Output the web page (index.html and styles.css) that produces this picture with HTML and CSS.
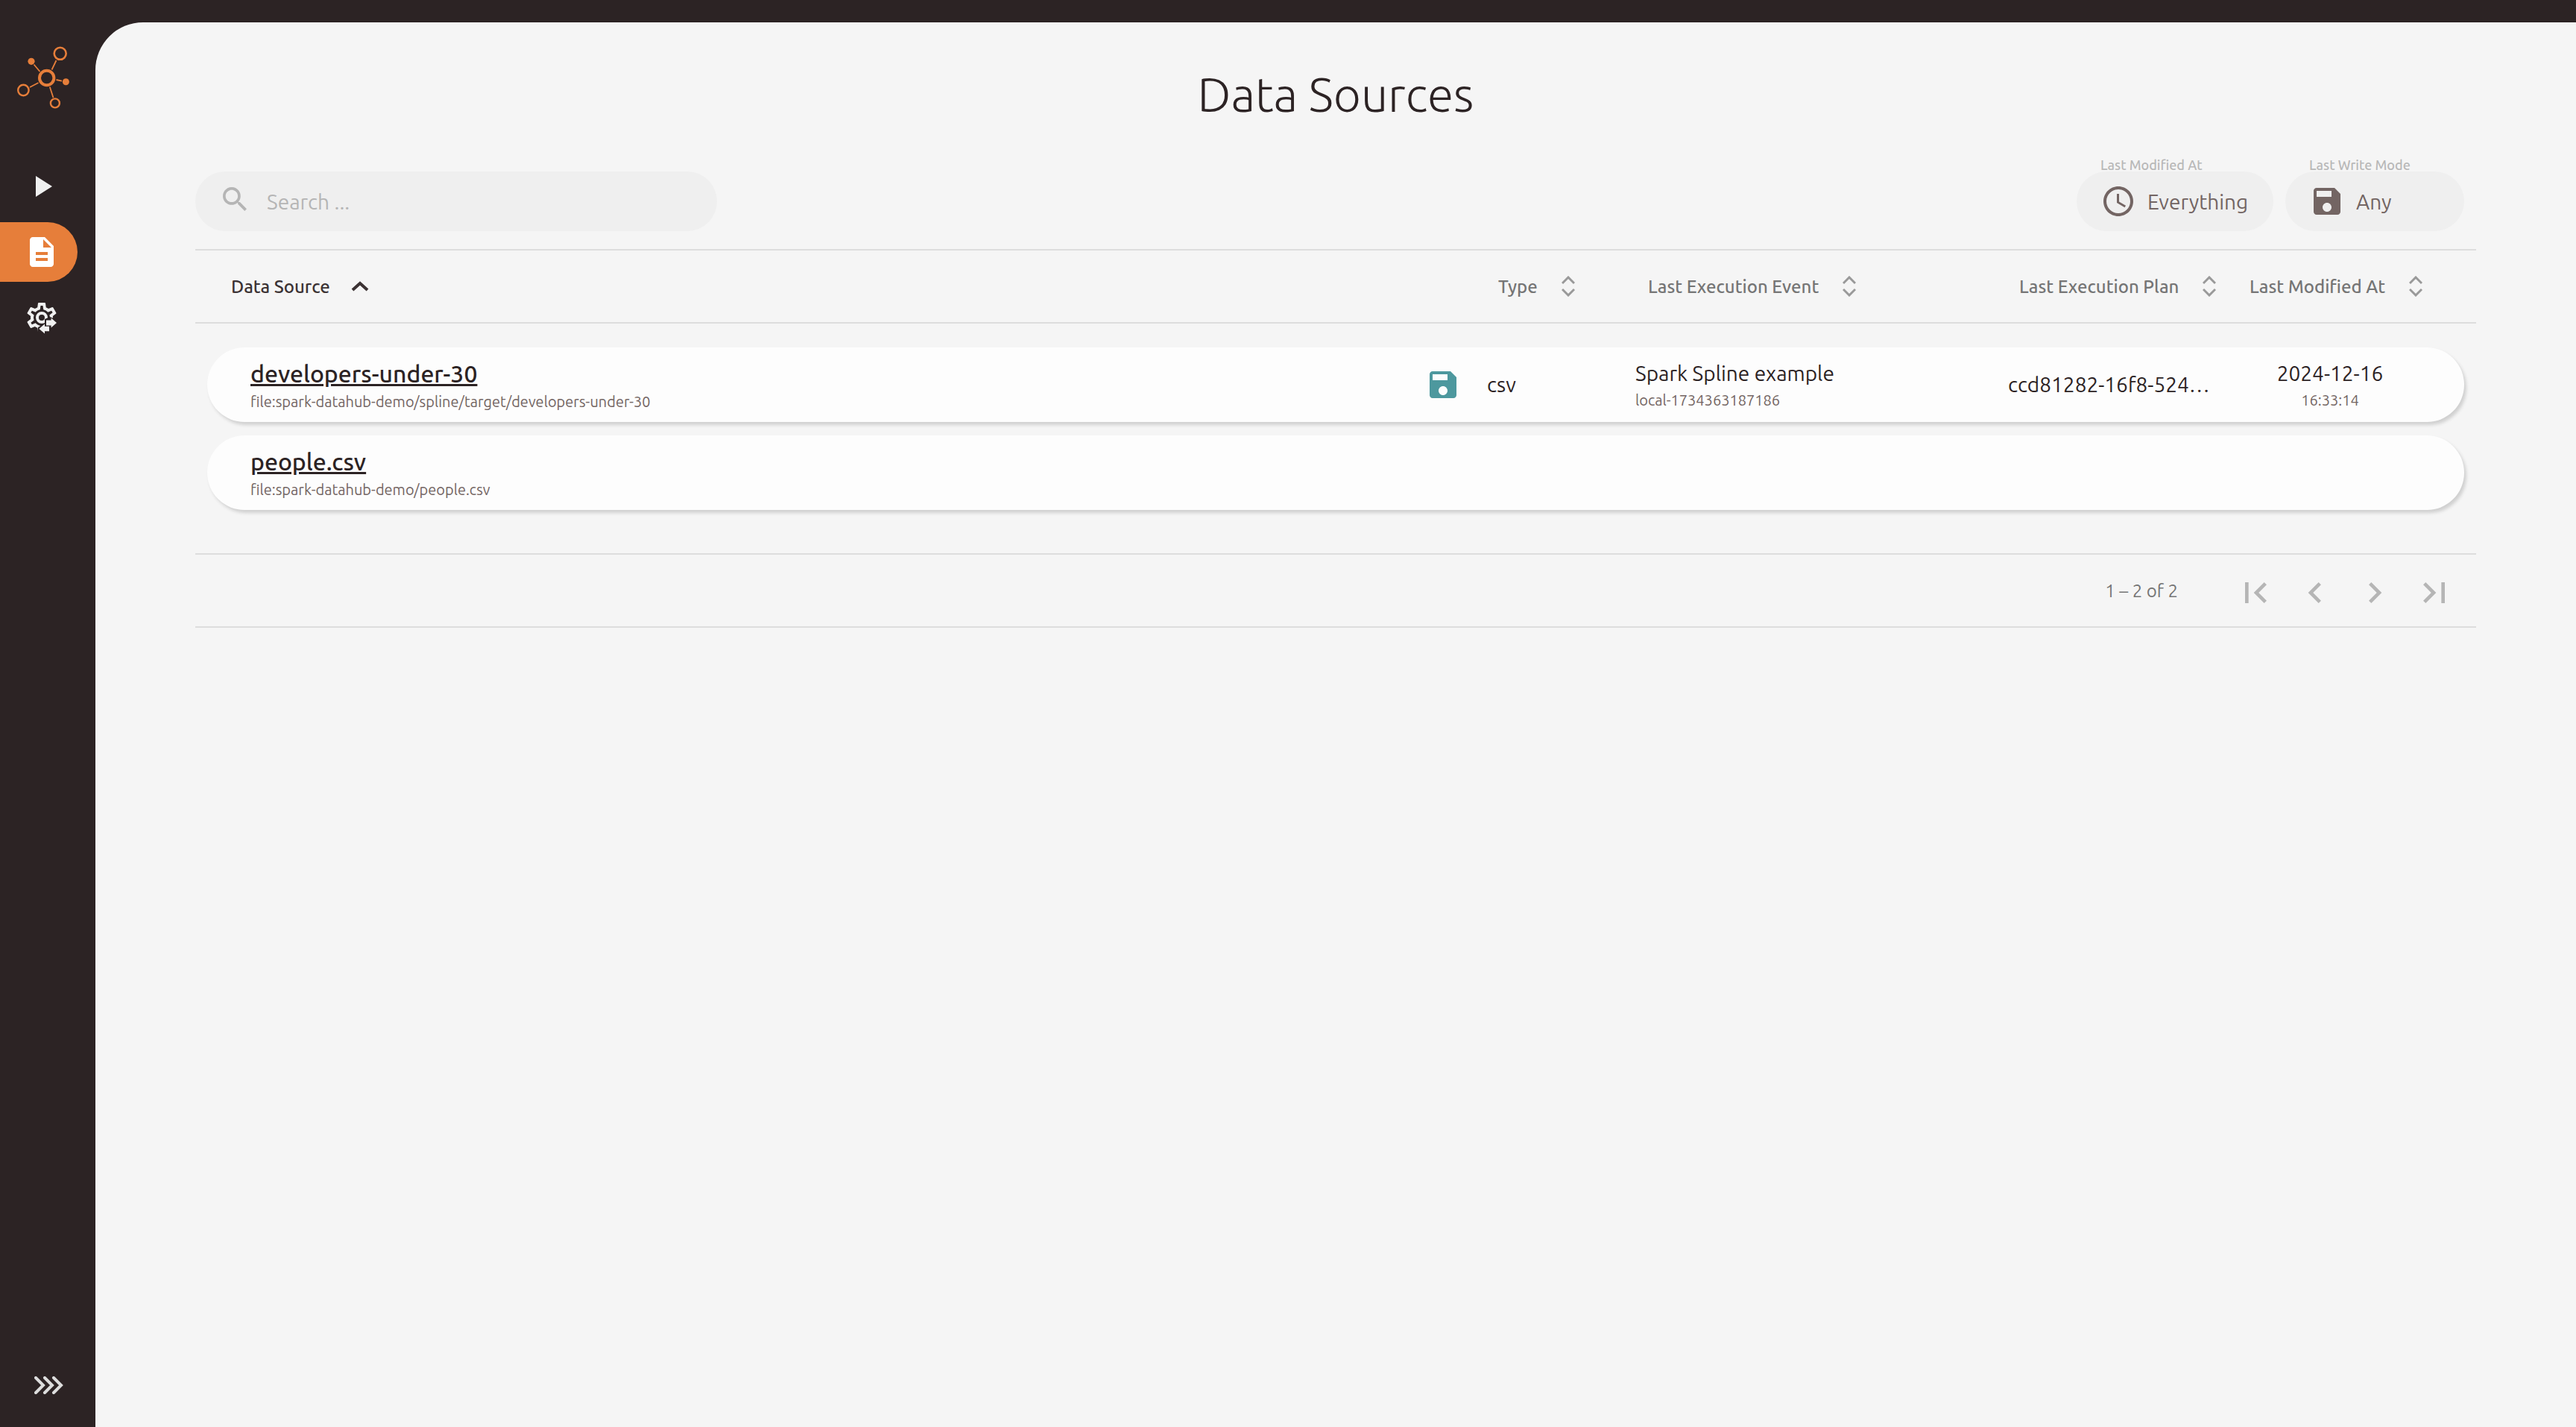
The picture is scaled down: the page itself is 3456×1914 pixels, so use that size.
FILE: index.html
```html
<!DOCTYPE html>
<html lang="en">
<head>
  <meta charset="utf-8">
  <meta name="viewport" content="width=device-width, initial-scale=1">
  <title>Data Sources</title>
  <link rel="stylesheet" href="styles.css">
</head>
<body>
  <svg width="0" height="0" class="sprite" aria-hidden="true">
    <symbol id="save" viewBox="0 0 24 24"><path d="M17 3H5c-1.110 0-2 .9-2 2v14c0 1.100.89 2 2 2h14c1.100 0 2-.9 2-2V7l-4-4zm-5 16c-1.660 0-3-1.340-3-3s1.340-3 3-3 3 1.340 3 3-1.340 3-3 3zm3-10H5V5h10v4z"/></symbol>
    <symbol id="sort" viewBox="0 0 18 28"><path d="M1 10l8-8 8 8M1 18l8 8 8-8" fill="none" stroke="currentColor" stroke-width="3"/></symbol>
  </svg>

  <div class="app">
    <aside class="sidebar">
      <a class="logo" href="#" aria-label="Home">
        <svg viewBox="16 56 84 96" width="84" height="96" stroke="currentColor">
          <circle cx="62.700" cy="104.500" r="9.700" stroke-width="4"/>
          <circle cx="80.700" cy="71.800" r="8" stroke-width="2.600"/>
          <circle cx="31.400" cy="121" r="7.200" stroke-width="2.400"/>
          <circle cx="73.900" cy="138.400" r="6" stroke-width="2.400"/>
          <circle cx="42" cy="82.300" r="4.600" fill="currentColor" stroke="none"/>
          <circle cx="88.400" cy="109.700" r="4.500" fill="currentColor" stroke="none"/>
          <path d="M45.500 86.500l8 9.500M75.500 81l-6 12.500M75.500 107l7.500 1.700M66.800 116.500l4.700 14.500M51.500 111l-11.500 6" stroke-width="1.800"/>
        </svg>
      </a>
      <nav class="nav" aria-label="Main">
        <a class="nav-item" href="#" aria-label="Execution events"><svg viewBox="0 0 24 24"><path d="M8 5v14l11-7z"/></svg></a>
        <a class="nav-item active" href="#" aria-label="Data sources" aria-current="page"><svg viewBox="0 0 24 24"><path d="M14 2H6c-1.100 0-2 .9-2 2v16c0 1.100.9 2 2 2h12c1.100 0 2-.9 2-2V8l-6-6zm2 16H8v-2h8v2zm0-4H8v-2h8v2zm-3-5V3.500L18.500 9H13z"/></svg></a>
        <a class="nav-item" href="#" aria-label="Settings">
          <svg viewBox="0 0 24 24">
            <mask id="cut"><path fill="#fff" d="M0 0h24v12.800h-3.500L17.500 11.500 14 13v3l-4.500 2.500L9 24H0z"/></mask>
            <path mask="url(#cut)" d="M12 8a4 4 0 1 1 0 8 4 4 0 0 1 0-8m0 2a2 2 0 1 0 0 4 2 2 0 0 0 0-4M10 22c-.25 0-.46-.18-.5-.42l-.37-2.650c-.63-.25-1.170-.59-1.690-.99l-2.490 1.010c-.22.080-.49 0-.61-.22l-2-3.460c-.13-.22-.070-.49.12-.64l2.110-1.660L4.500 12l.070-1-2.110-1.630c-.19-.15-.25-.42-.12-.64l2-3.460c.12-.22.39-.31.61-.22l2.490 1c.52-.39 1.060-.73 1.690-.98l.37-2.650c.040-.24.25-.42.5-.42h4c.25 0 .46.18.5.42l.37 2.650c.63.25 1.170.59 1.690.98l2.490-1c.22-.090.49 0 .61.22l2 3.460c.13.22.070.49-.12.64L19.430 11l.070 1-.070 1 2.110 1.630-4 4-8 3.370M11.250 4l-.37 2.610c-1.200.25-2.260.89-3.030 1.780L5.440 7.350l-.75 1.300L6.800 10.200a5.550 5.550 0 0 0 0 3.600l-2.120 1.560.75 1.300 2.430-1.040c.77.88 1.820 1.520 3.010 1.760l.37 2.620h1.520l.37-2.610c1.190-.25 2.240-.89 3.010-1.770l2.430 1.040.75-1.300-2.120-1.550c.4-1.170.4-2.440 0-3.610l2.110-1.550-.75-1.300-2.410 1.040a5.420 5.420 0 0 0-3.030-1.770L12.750 4z"/>
            <path d="M15 13.800h3.300v-1.600l3.700 3.300-3.700 3.300v-1.600H15zM17 17.900v3.200h-3v1.700l-3.800-3.300 3.800-3.300v1.700z"/>
          </svg>
        </a>
      </nav>
      <button class="expand" type="button" aria-label="Expand menu">
        <svg viewBox="0 0 40 24" width="40" height="24"><path d="M2 2l10 10L2 22M14 2l10 10-10 10M26 2l10 10-10 10"/></svg>
      </button>
    </aside>

    <main class="content">
      <h1>Data Sources</h1>

      <form class="toolbar">
        <label class="search">
          <svg viewBox="3 3 17.500 17.500" width="32" height="32" aria-hidden="true"><path d="M15.500 14h-.79l-.28-.27C15.410 12.590 16 11.110 16 9.500 16 5.910 13.090 3 9.500 3S3 5.910 3 9.500 5.910 16 9.500 16c1.610 0 3.090-.59 4.230-1.570l.27.28v.79l5 4.990L20.490 19l-4.990-5zm-6 0C7.010 14 5 11.990 5 9.500S7.010 5 9.500 5 14 7.010 14 9.500 11.990 14 9.500 14z"/></svg>
          <input type="text" placeholder="Search ..." aria-label="Search">
        </label>
        <div class="filters">
          <div class="filter filter-date">
            <label for="modified">Last Modified At</label>
            <div class="pill">
              <svg viewBox="0 0 24 24" aria-hidden="true"><path d="M11.990 2C6.470 2 2 6.480 2 12s4.470 10 9.990 10C17.520 22 22 17.520 22 12S17.520 2 11.990 2zM12 20c-4.420 0-8-3.580-8-8s3.580-8 8-8 8 3.580 8 8-3.580 8-8 8zm.5-13H11v6l5.250 3.150.75-1.230-4.500-2.670z"/></svg>
              <select id="modified"><option>Everything</option></select>
            </div>
          </div>
          <div class="filter filter-mode">
            <label for="mode">Last Write Mode</label>
            <div class="pill">
              <svg aria-hidden="true"><use href="#save"/></svg>
              <select id="mode"><option>Any</option></select>
            </div>
          </div>
        </div>
      </form>

      <table class="sources">
        <thead>
          <tr>
            <th class="sorted" aria-sort="ascending"><button type="button">Data Source <svg viewBox="0 0 24 14" width="24" height="14"><path d="M2 12L12 3l10 9" fill="none" stroke="currentColor" stroke-width="4"/></svg></button></th>
            <th><button type="button">Type <svg width="18" height="28"><use href="#sort"/></svg></button></th>
            <th><button type="button">Last Execution Event <svg width="18" height="28"><use href="#sort"/></svg></button></th>
            <th><button type="button">Last Execution Plan <svg width="18" height="28"><use href="#sort"/></svg></button></th>
            <th><button type="button">Last Modified At <svg width="18" height="28"><use href="#sort"/></svg></button></th>
          </tr>
        </thead>
        <tbody>
          <tr>
            <td><a class="name" href="#">developers-under-30</a><small>file:spark-datahub-demo/spline/target/developers-under-30</small></td>
            <td class="type"><svg aria-hidden="true"><use href="#save"/></svg>csv</td>
            <td><a href="#">Spark Spline example</a><small>local-1734363187186</small></td>
            <td><a href="#">ccd81282-16f8-524…</a></td>
            <td class="date">2024-12-16<small>16:33:14</small></td>
          </tr>
          <tr>
            <td><a class="name" href="#">people.csv</a><small>file:spark-datahub-demo/people.csv</small></td>
            <td></td>
            <td></td>
            <td></td>
            <td></td>
          </tr>
        </tbody>
      </table>

      <footer class="paginator">
        <span>1 – 2 of 2</span>
        <div class="pages">
          <button type="button" disabled aria-label="First page"><svg viewBox="0 0 24 24"><path d="M18.410 16.590L13.820 12l4.590-4.590L17 6l-6 6 6 6zM6 6h2v12H6z"/></svg></button>
          <button type="button" disabled aria-label="Previous page"><svg viewBox="0 0 24 24"><path d="M15.410 7.410L14 6l-6 6 6 6 1.410-1.410L10.830 12z"/></svg></button>
          <button type="button" disabled aria-label="Next page"><svg viewBox="0 0 24 24"><path d="M10 6L8.590 7.410 13.170 12l-4.580 4.590L10 18l6-6z"/></svg></button>
          <button type="button" disabled aria-label="Last page"><svg viewBox="0 0 24 24"><path d="M5.590 7.410L10.180 12l-4.590 4.590L7 18l6-6-6-6zM16 6h2v12h-2z"/></svg></button>
        </div>
      </footer>
    </main>
  </div>
</body>
</html>
```
FILE: styles.css
```css
* { box-sizing: border-box; }

body {
  margin: 0;
  background: #2c2324;
  color: #2c2324;
  font-family: Ubuntu, "Noto Sans", sans-serif;
  font-size: 28px;
}

a { color: inherit; text-decoration: none; }
button, input, select { font: inherit; color: inherit; border: 0; padding: 0; margin: 0; background: none; }
svg { display: block; flex: none; fill: currentColor; }
.sprite { position: absolute; }

.app {
  display: grid;
  grid-template-columns: 128px 1fr;
  min-height: 100vh;
  padding-top: 30px;
}

/* Sidebar */
.sidebar { display: flex; flex-direction: column; padding: 26px 0 44px; color: #f0f0f0; }
.logo { padding-left: 16px; color: #e67e3a; }
.logo svg { fill: none; }
.nav { display: flex; flex-direction: column; gap: 8px; margin-top: 58px; }
.nav-item { display: flex; align-items: center; width: 104px; height: 80px; padding-left: 32px; border-radius: 0 40px 40px 0; }
.nav-item svg { width: 48px; height: 48px; }
.active { background: #e67e3a; color: #fff; }
.expand { margin: auto 0 0 46px; width: 40px; color: #ddd; }
.expand path { fill: none; stroke: currentColor; stroke-width: 4; stroke-linecap: round; }

/* Page */
.content { padding: 48px 134px; background: #f5f5f5; border-top-left-radius: 64px; }
h1 { margin: 0; font-size: 64px; line-height: 96px; font-weight: 300; text-align: center; }

.toolbar { display: flex; justify-content: space-between; align-items: flex-end; margin-top: 38px; padding: 0 16px 24px 0; }
.search { display: flex; align-items: flex-start; gap: 27px; width: 700px; height: 80px; padding: 21px 37px; border-radius: 40px; background: #efefef; color: #b5b5b5; }
.search input { flex: 1; min-width: 0; height: 38px; outline: 0; }
.search input::placeholder { color: #b5b5b5; opacity: 1; }
.filters { display: flex; gap: 16px; }
.filter label { display: block; padding-left: 32px; font-size: 18px; line-height: 18px; font-weight: 500; color: #b8b8b8; }
.filter-date { width: 264px; }
.filter-mode { width: 240px; }
.pill { display: flex; align-items: center; gap: 15px; height: 80px; padding-left: 32px; border-radius: 40px; background: #efefef; color: #736563; }
.pill svg { width: 48px; height: 48px; }
.pill select { flex: 1; min-width: 0; appearance: none; }

/* Table */
.sources, .sources thead, .sources tbody { display: block; }
.sources tr { display: grid; align-items: center; }
.sources thead tr { grid-template-columns: 1fr 201px 498px 309px 304px; height: 100px; padding-left: 48px; border: solid #ddd; border-width: 2px 0; }
.sources th { padding: 0; text-align: left; font-size: 24px; font-weight: 500; color: #757575; }
.sources th button { display: flex; align-items: center; gap: 32px; }
.sources th svg { color: #999; }
.sources .sorted, .sources .sorted svg { color: #3b3233; }
.sources .sorted button { gap: 28px; }

.sources tbody { padding: 32px 16px 58px; }
.sources tbody tr { grid-template-columns: 1fr 276px 500px 302px 260px; height: 100px; padding: 0 50px 0 58px; border-radius: 50px; background: #fdfdfd; box-shadow: 3px 4px 4px #d0d0d0; }
.sources tbody tr + tr { margin-top: 18px; }
.sources td { padding: 0; line-height: 42px; }
.sources td a, .sources small { display: block; }
.sources td .name { width: max-content; font-size: 32px; line-height: 46px; font-weight: 500; text-decoration: underline; text-decoration-thickness: 3px; }
.sources small { font-size: 20px; line-height: 30px; color: #736563; }
.sources .type { display: flex; align-items: center; gap: 35px; }
.type svg { width: 48px; height: 48px; margin-left: -6px; color: #4d989e; }
.sources .date { text-align: center; }

/* Paginator */
.paginator { display: flex; justify-content: flex-end; align-items: center; gap: 64px; height: 100px; padding-right: 16px; border: solid #ddd; border-width: 2px 0; font-size: 24px; color: #757575; }
.pages { display: flex; padding-top: 6px; }
.pages button { display: grid; place-items: center; width: 80px; height: 80px; color: #b5b5b5; }
.pages svg { width: 56px; height: 56px; }
```
